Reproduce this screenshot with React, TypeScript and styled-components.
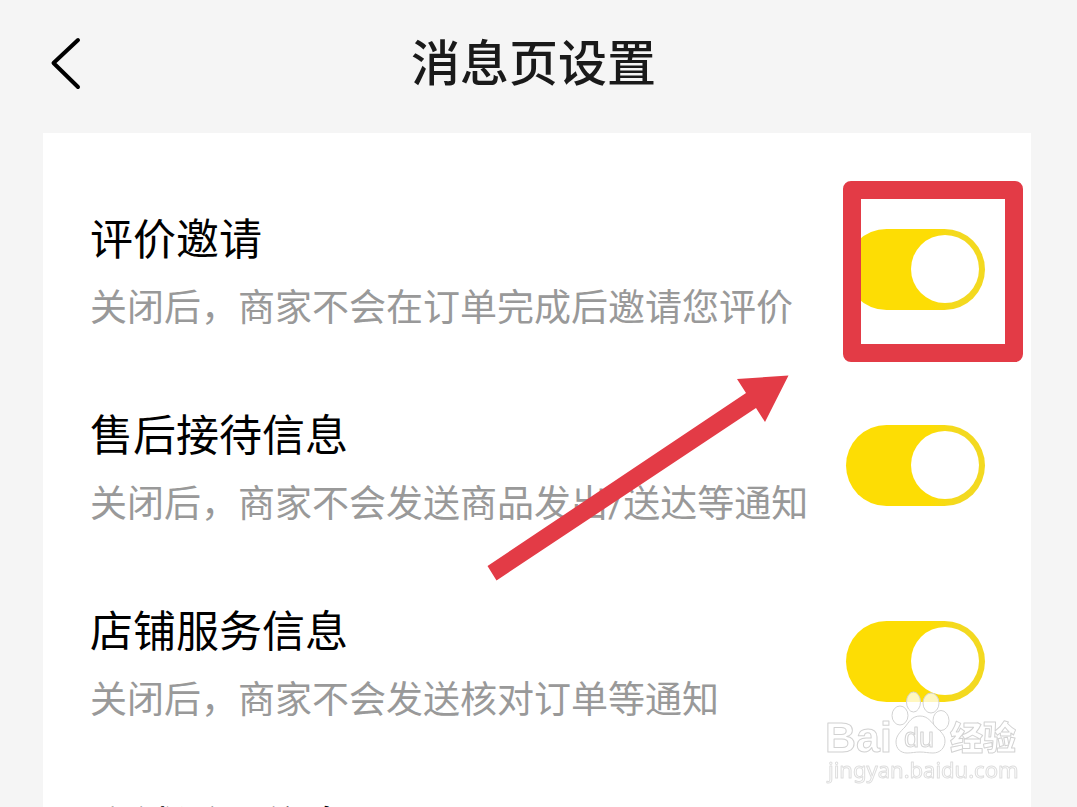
import React from 'react';
import styled, { createGlobalStyle } from 'styled-components';

const GlobalStyle = createGlobalStyle`
  *, *::before, *::after { box-sizing: border-box; }
  body {
    margin: 0;
    background: #f5f5f5;
    font-family: Roboto, 'Noto Sans CJK SC', sans-serif;
  }
`;

const Page = styled.div`
  display: flex;
  flex-direction: column;
  height: 100vh;
  overflow: auto;
  scrollbar-width: none;
  background: #f5f5f5;
`;

const Header = styled.header`
  display: grid;
  grid-template-columns: 60px 1fr 60px;
  align-items: center;
  flex: none;
  height: 133px;
  padding: 0 46px 6px 36px;
`;

const BackButton = styled.button`
  display: flex;
  align-items: center;
  justify-content: center;
  width: 60px;
  height: 60px;
  padding: 0;
  border: 0;
  background: none;
  color: #000;
  cursor: pointer;
`;

const Title = styled.h1`
  margin: 0;
  padding-top: 2px;
  color: #1a1a1a;
  font-size: 49px;
  font-weight: 500;
  line-height: 64px;
  text-align: center;
`;

const Card = styled.main`
  position: relative;
  display: flex;
  flex-direction: column;
  flex: none;
  gap: 58px;
  margin: 0 46px 0 43px;
  padding: 67px 46px 67px 47px;
  background: #fff;
`;

const Row = styled.section`
  display: flex;
  align-items: center;
  justify-content: space-between;
`;

const RowText = styled.div`
  display: flex;
  flex-direction: column;
  white-space: nowrap;
`;

const RowTitle = styled.label`
  color: #000;
  font-size: 43px;
  line-height: 80px;
`;

const RowHint = styled.p`
  min-height: 58px;
  margin: 0;
  color: #999;
  font-size: 37px;
  line-height: 58px;
`;

const SwitchSlot = styled.div`
  position: relative;
  flex: none;
  width: 139px;
  height: 81px;
`;

const Switch = styled.input`
  display: flex;
  align-items: center;
  appearance: none;
  width: 100%;
  height: 100%;
  margin: 0;
  padding: 6px;
  border-radius: 41px;
  background: #e5e5e5;
  cursor: pointer;

  &::before {
    content: '';
    width: 68px;
    height: 68px;
    border-radius: 50%;
    background: #fff;
  }

  &:checked {
    justify-content: flex-end;
    background: linear-gradient(90deg, #fddd04 60%, #f3d920 80%);
  }
`;

const Highlight = styled.span`
  position: absolute;
  top: -48px;
  left: -3px;
  width: 180px;
  height: 181px;
  border: 18px solid #e33b46;
  border-radius: 8px;
  pointer-events: none;
`;

const Arrow = styled.svg`
  position: absolute;
  top: 242px;
  right: 242px;
  width: 302px;
  height: 206px;
  pointer-events: none;
`;

const Watermark = styled.svg`
  position: fixed;
  right: 52px;
  bottom: 17px;
  width: 205px;
  height: 105px;
  pointer-events: none;
`;

type Setting = { id: string; title: string; hint: string; highlighted?: boolean };

const settings: Setting[] = [
  { id: 'review', title: '评价邀请', hint: '关闭后，商家不会在订单完成后邀请您评价', highlighted: true },
  { id: 'after-sale', title: '售后接待信息', hint: '关闭后，商家不会发送商品发出/送达等通知' },
  { id: 'service', title: '店铺服务信息', hint: '关闭后，商家不会发送核对订单等通知' },
  { id: 'activity', title: '店铺活动信息', hint: '' },
];

export default function App() {
  return (
    <Page>
      <GlobalStyle />
      <Header>
        <BackButton type="button" aria-label="返回">
          <svg width="32" height="54" viewBox="0 0 32 54" fill="none" stroke="currentColor" strokeWidth="4" strokeLinecap="round" strokeLinejoin="round">
            <path d="M28 3 3.500 26 28 50" />
          </svg>
        </BackButton>
        <Title>消息页设置</Title>
      </Header>
      <Card>
        {settings.map(({ id, title, hint, highlighted }) => (
          <Row key={id}>
            <RowText>
              <RowTitle htmlFor={id}>{title}</RowTitle>
              <RowHint>{hint}</RowHint>
            </RowText>
            <SwitchSlot>
              <Switch id={id} type="checkbox" role="switch" defaultChecked />
              {highlighted && <Highlight />}
            </SwitchSlot>
          </Row>
        ))}
        <Arrow viewBox="0 0 302 206" aria-hidden="true">
          <path d="M0.500 191 9.500 205.500 269 33 278 47 301.500 0.500 250 4 259 18Z" fill="#e33b46" />
        </Arrow>
      </Card>
      <Watermark viewBox="820 685 205 105" aria-hidden="true">
        <g fill="#fff" fillOpacity="0.75" stroke="#d2d2d2" strokeWidth="1" strokeLinejoin="round">
          <text x="825" y="752" fontFamily="Liberation Sans" fontWeight="700" fontSize="43">Bai</text>
          <ellipse cx="900" cy="715.500" rx="8" ry="9.500" />
          <ellipse cx="913.500" cy="702" rx="7" ry="10" />
          <ellipse cx="931" cy="703" rx="8" ry="10" />
          <ellipse cx="941" cy="720.500" rx="8" ry="10" />
          <path d="M920 716c-8 0-11 6-15 11-5 5-9 9-9 15 0 7 5 11 11 11 5 0 8-1 13-1s8 1 13 1c7 0 12-5 12-12 0-6-4-9-9-14s-8-11-16-11Z" />
          <text x="904" y="747" fontFamily="Liberation Sans" fontWeight="400" fontSize="27">du</text>
          <text x="950" y="750" fontFamily="Noto Sans CJK SC" fontWeight="900" fontSize="33">经验</text>
          <text x="828" y="778" fontFamily="Noto Sans" fontWeight="400" fontSize="22" stroke="#dedede">jingyan.baidu.com</text>
        </g>
      </Watermark>
    </Page>
  );
}
